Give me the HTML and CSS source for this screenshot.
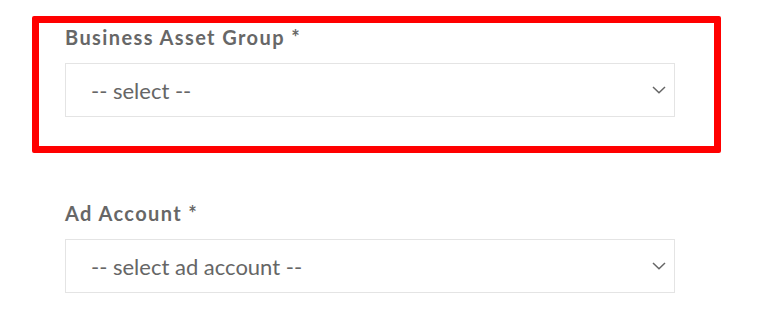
FILE: index.html
```html
<!DOCTYPE html>
<html>
<head>
<meta charset="utf-8">
<link rel="stylesheet" href="styles.css">
</head>
<body>
<div class="page">
  <div class="field field-highlight">
    <label class="label">Business Asset Group *</label>
    <div class="select">
      <span class="select-text">-- select --</span>
      <svg class="chevron" width="14" height="8" viewBox="0 0 14 8"><path d="M1 1 L7 6.8 L13 1" fill="none" stroke="#666" stroke-width="1.5"/></svg>
    </div>
  </div>
  <div class="field field-second">
    <label class="label">Ad Account *</label>
    <div class="select">
      <span class="select-text">-- select ad account --</span>
      <svg class="chevron" width="14" height="8" viewBox="0 0 14 8"><path d="M1 1 L7 6.8 L13 1" fill="none" stroke="#666" stroke-width="1.5"/></svg>
    </div>
  </div>
</div>
</body>
</html>
```

FILE: styles.css
```css
html, body {
  margin: 0;
  padding: 0;
  background: #fff;
}
body {
  font-family: Lato, "Liberation Sans", sans-serif;
  width: 768px;
  height: 336px;
  overflow: hidden;
}
.page {
  padding: 26px 0 0 65px;
  width: 610px;
}
.field {
  display: flex;
  flex-direction: column;
  gap: 14px;
}
.field-highlight {
  position: relative;
}
.field-highlight::after {
  content: "";
  position: absolute;
  left: -33px;
  top: -10px;
  right: -46px;
  bottom: -36px;
  border: 7px solid #ff0000;
  border-radius: 2px;
  pointer-events: none;
}
.field-second {
  margin-top: 85px;
}
.label {
  font-size: 20px;
  line-height: 23px;
  font-weight: 700;
  letter-spacing: 1.4px;
  color: #676767;
}
.select {
  height: 54px;
  box-sizing: border-box;
  border: 1px solid #e4e4e4;
  display: flex;
  align-items: center;
  justify-content: space-between;
  padding: 0 8px 0 25px;
  background: #fff;
}
.select-text {
  font-size: 22px;
  color: #666666;
}
.chevron {
  display: block;
}
```
